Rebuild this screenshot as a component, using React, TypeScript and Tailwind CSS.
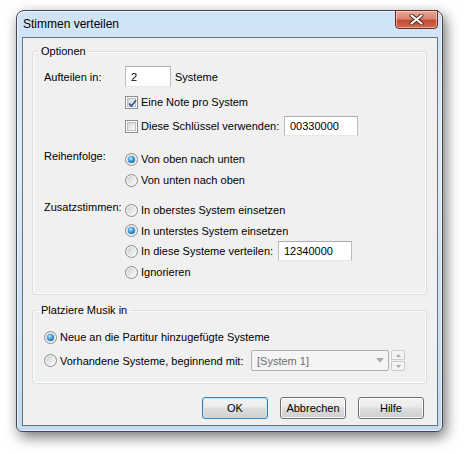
import React from "react";

function Checkbox({ checked }: { checked?: boolean }) {
  return (
    <span className="relative flex w-[13px] h-[13px] shrink-0 border border-[#8e8f8f] bg-white p-[1px]">
      <span className="flex-1 border border-[#c0c0c0] bg-[linear-gradient(135deg,#d6d6d6,#fbfbfb)]" />
      {checked ? (
        <svg className="absolute inset-0" width="13" height="13" viewBox="0 0 13 13">
          <path d="M3 6.3 L5.4 9 L10 3.2" fill="none" stroke="#3b5aa0" strokeWidth="1.8" />
        </svg>
      ) : null}
    </span>
  );
}

function Radio({ checked }: { checked?: boolean }) {
  return (
    <span className="flex w-[13px] h-[13px] shrink-0 items-center justify-center rounded-full border border-[#8a8c8e] bg-[linear-gradient(135deg,#d0d0d0,#fcfcfc)] shadow-[inset_0_0_0_1px_#f4f4f4]">
      {checked ? (
        <span className="w-[7px] h-[7px] rounded-full bg-[radial-gradient(circle_at_40%_35%,#c2eaff_0%,#3f9fe2_40%,#0e4a83_100%)] shadow-[0_0_1px_#3c7fb1]" />
      ) : (
        <span className="w-[7px] h-[7px] rounded-full bg-[linear-gradient(135deg,#d2d2d2,#f8f8f8)]" />
      )}
    </span>
  );
}

function TextBox({ value, w, h }: { value: string; w: string; h: string }) {
  return (
    <span
      className={`${w} ${h} flex items-center border border-[#b8bcc3] border-t-[#abadb3] border-b-[#e3e9ef] bg-white pl-[5px] leading-[14px]`}
    >
      {value}
    </span>
  );
}

function Button({ label, def }: { label: string; def?: boolean }) {
  return (
    <div
      className={
        def
          ? "w-[66px] h-[22px] flex items-center justify-center rounded-[3px] border border-[#3c7fb1] bg-[linear-gradient(#f4f4f4_0%,#ececec_45%,#dedede_50%,#d0d0d0_100%)] shadow-[inset_0_0_0_1px_#bfe6fb]"
          : "w-[66px] h-[22px] flex items-center justify-center rounded-[3px] border border-[#707070] bg-[linear-gradient(#f2f2f2_0%,#ebebeb_45%,#dddddd_50%,#cfcfcf_100%)] shadow-[inset_0_0_0_1px_rgba(255,255,255,0.8)]"
      }
    >
      {label}
    </div>
  );
}

function CloseButton() {
  return (
    <div className="-mt-[1px] mr-[4px] w-[43px] h-[19px] flex items-center justify-center rounded-b-[4px] border border-[#6b2a1f] bg-[linear-gradient(#e9aa9b_0%,#d98571_45%,#c44c33_55%,#cf6a4e_100%)] shadow-[inset_0_0_0_1px_rgba(255,230,220,0.55)]">
      <svg width="15" height="11" viewBox="0 0 15 11">
        <path d="M2.5 1.5 L12.5 9.5 M12.5 1.5 L2.5 9.5" stroke="#4a2721" strokeWidth="4" strokeLinecap="round" />
        <path d="M2.5 1.5 L12.5 9.5 M12.5 1.5 L2.5 9.5" stroke="#ffffff" strokeWidth="2.2" strokeLinecap="round" />
      </svg>
    </div>
  );
}

export default function App() {
  return (
    <div className="w-[465px] h-[454px] overflow-hidden bg-white pl-[16px] pt-[10px] [font-family:'Liberation_Sans',Arial,sans-serif] text-[11px] text-black">
      <div className="w-[427px] h-[422px] flex flex-col rounded-t-[8px] rounded-b-[6px] border border-[#40474e] bg-[linear-gradient(180deg,#cfe3f7_0%,#dcecfa_35%,#cde2f5_70%,#c2daf1_100%)] shadow-[3px_5px_14px_rgba(0,0,0,0.55),inset_0_0_0_1px_rgba(255,255,255,0.6)]">
        <div className="h-[26px] flex items-start justify-between">
          <span className="pl-[6px] leading-[26px] text-[12px]">Stimmen verteilen</span>
          <CloseButton />
        </div>
        <div className="ml-[5px] mr-[4px] mb-[5px] flex-1 flex flex-col border border-[#6b7278] bg-[#f0f0f0]">
          {/* Optionen */}
          <fieldset className="mt-[6px] ml-[9px] mr-[10px] rounded-[3px] border border-[#d5dfe5] pl-[11px] pb-[12px] shadow-[inset_0_0_0_1px_rgba(255,255,255,0.7)]">
            <legend className="-ml-[6px] px-[3px] leading-[14px]">Optionen</legend>
            <div className="mt-[8px] h-[21px] flex items-center">
              <span className="w-[81px] leading-[14px]">Aufteilen in:</span>
              <TextBox value="2" w="w-[46px]" h="h-[21px]" />
              <span className="ml-[4px] leading-[14px]">Systeme</span>
            </div>
            <div className="mt-[5px] h-[20px] flex items-center">
              <span className="w-[81px]" />
              <Checkbox checked />
              <span className="ml-[3px] leading-[14px]">Eine Note pro System</span>
            </div>
            <div className="mt-[4px] h-[20px] flex items-center">
              <span className="w-[81px]" />
              <Checkbox />
              <span className="ml-[3px] w-[143px] leading-[14px]">Diese Schlüssel verwenden:</span>
              <TextBox value="00330000" w="w-[74px]" h="h-[20px]" />
            </div>

            <div className="mt-[13px] h-[20px] flex items-center">
              <span className="w-[81px] self-start leading-[14px]">Reihenfolge:</span>
              <Radio checked />
              <span className="ml-[3px] leading-[14px]">Von oben nach unten</span>
            </div>
            <div className="mt-[1px] h-[20px] flex items-center">
              <span className="w-[81px]" />
              <Radio />
              <span className="ml-[3px] leading-[14px]">Von unten nach oben</span>
            </div>

            <div className="mt-[10px] h-[20px] flex items-center">
              <span className="w-[81px] self-start leading-[14px]">Zusatzstimmen:</span>
              <Radio />
              <span className="ml-[3px] leading-[14px]">In oberstes System einsetzen</span>
            </div>
            <div className="h-[21px] flex items-center">
              <span className="w-[81px]" />
              <Radio checked />
              <span className="ml-[3px] leading-[14px]">In unterstes System einsetzen</span>
            </div>
            <div className="h-[20px] flex items-center">
              <span className="w-[81px]" />
              <Radio />
              <span className="ml-[3px] w-[137px] leading-[14px]">In diese Systeme verteilen:</span>
              <TextBox value="12340000" w="w-[74px]" h="h-[20px]" />
            </div>
            <div className="mt-[1px] h-[20px] flex items-center">
              <span className="w-[81px]" />
              <Radio />
              <span className="ml-[3px] leading-[14px]">Ignorieren</span>
            </div>
          </fieldset>

          {/* Platziere Musik in */}
          <fieldset className="mt-[8px] ml-[9px] mr-[10px] rounded-[3px] border border-[#d5dfe5] pl-[11px] pb-[12px] shadow-[inset_0_0_0_1px_rgba(255,255,255,0.7)]">
            <legend className="-ml-[6px] px-[3px] leading-[14px]">Platziere Musik in</legend>
            <div className="mt-[10px] h-[20px] flex items-center">
              <Radio checked />
              <span className="ml-[3px] leading-[14px]">Neue an die Partitur hinzugefügte Systeme</span>
            </div>
            <div className="mt-[3px] h-[21px] flex items-center">
              <Radio />
              <span className="ml-[3px] w-[191px] leading-[14px]">Vorhandene Systeme, beginnend mit:</span>
              <div className="w-[138px] h-[21px] flex items-center justify-between rounded-[2px] border border-[#adb2b5] bg-[#f4f4f4] pl-[5px] pr-[4px] text-[#6d6d6d]">
                <span className="leading-[14px]">[System 1]</span>
                <svg width="8" height="5" viewBox="0 0 8 5">
                  <path d="M0 0 L8 0 L4 4.5 Z" fill="#a9a9a9" />
                </svg>
              </div>
              <div className="ml-[2px] w-[14px] h-[21px] flex flex-col">
                <div className="h-[10px] flex items-center justify-center rounded-t-[2px] border border-[#c9cbcd] bg-[#f4f4f4]">
                  <svg width="5" height="3" viewBox="0 0 5 3">
                    <path d="M0 3 L5 3 L2.5 0 Z" fill="#a9a9a9" />
                  </svg>
                </div>
                <div className="mt-[1px] h-[10px] flex items-center justify-center rounded-b-[2px] border border-[#c9cbcd] bg-[#f4f4f4]">
                  <svg width="5" height="3" viewBox="0 0 5 3">
                    <path d="M0 0 L5 0 L2.5 3 Z" fill="#a9a9a9" />
                  </svg>
                </div>
              </div>
            </div>
          </fieldset>

          <div className="mt-[13px] pr-[13px] flex justify-end gap-[12px]">
            <Button label="OK" def />
            <Button label="Abbrechen" />
            <Button label="Hilfe" />
          </div>
        </div>
      </div>
    </div>
  );
}
